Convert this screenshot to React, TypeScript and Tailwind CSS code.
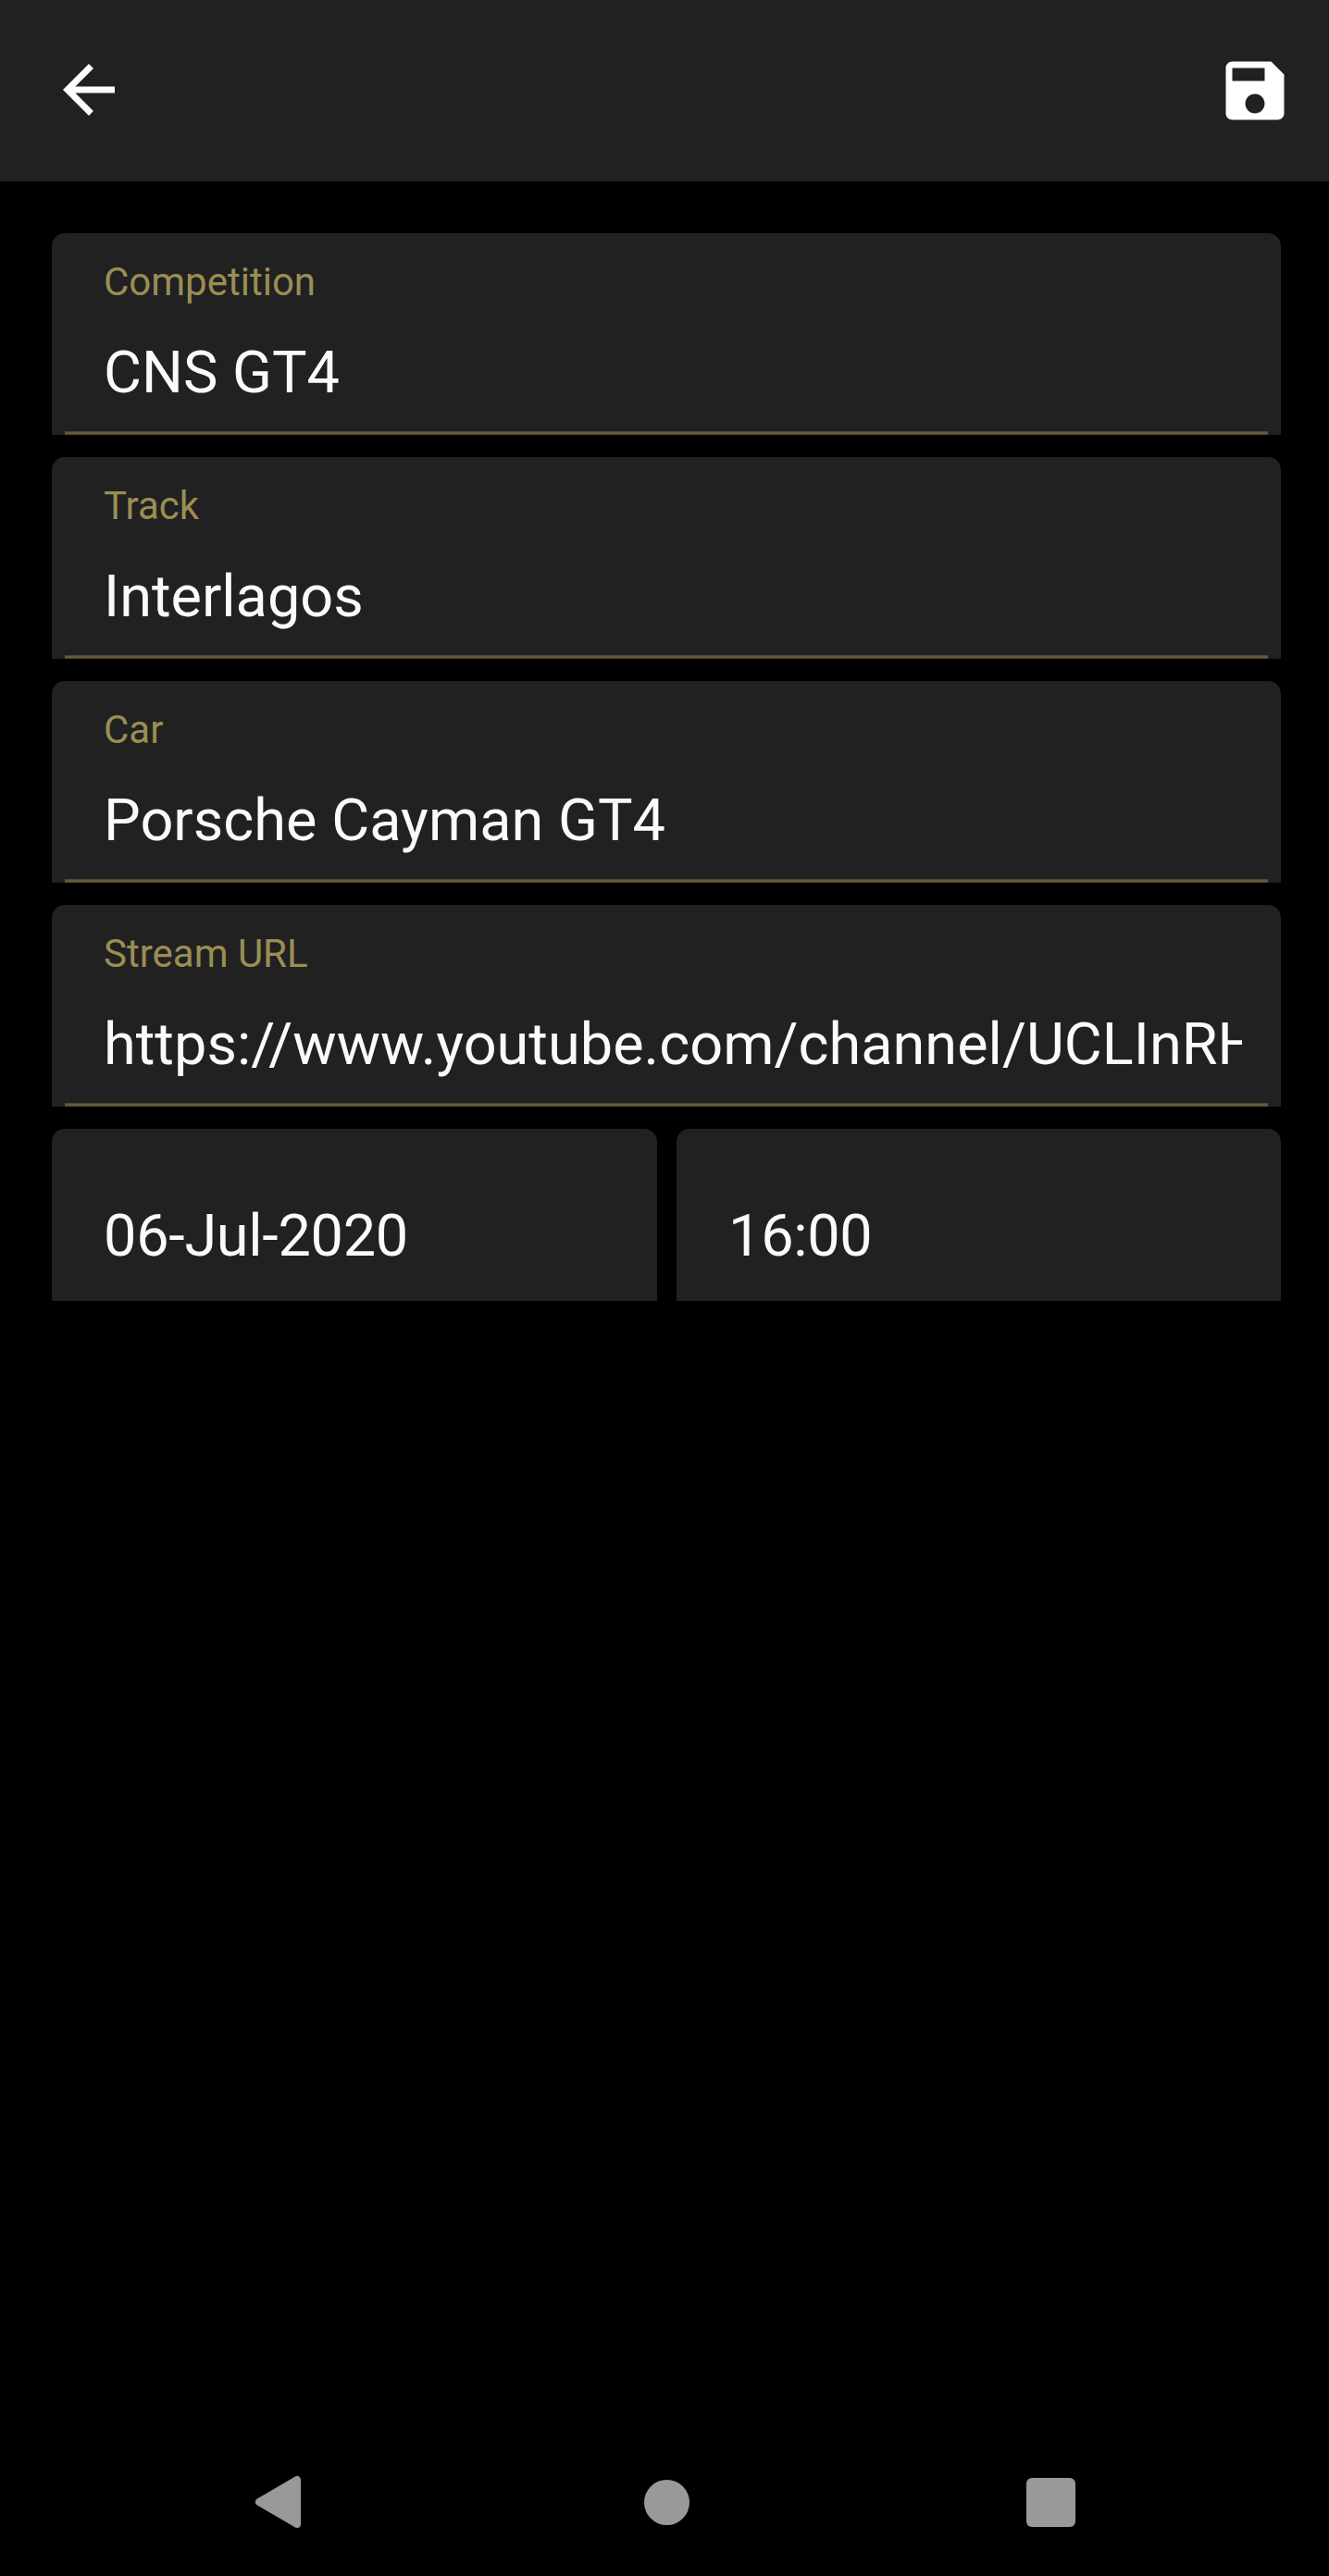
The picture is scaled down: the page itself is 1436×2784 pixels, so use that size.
import React from "react";

const fields = [
  { label: "Competition", value: "CNS GT4", tracking: "tracking-normal" },
  { label: "Track", value: "Interlagos", tracking: "tracking-normal" },
  { label: "Car", value: "Porsche Cayman GT4", tracking: "tracking-[0.04px]" },
  {
    label: "Stream URL",
    value: "https://www.youtube.com/channel/UCLInRH",
    tracking: "tracking-[0.025px]",
  },
];

function Field({ label, value, tracking }: { label: string; value: string; tracking: string }) {
  return (
    <div className="flex h-[218px] flex-col rounded-t-[14px] bg-[#212121] pt-[28px]">
      <div className="ml-14 h-[49px] text-[42px] leading-[49px] text-[#9b8e53]">{label}</div>
      <div
        className={`ml-14 mr-[42px] mt-[37px] h-[74px] overflow-hidden whitespace-nowrap text-[63px] leading-[74px] ${tracking}`}
      >
        {value}
      </div>
      <div className="mx-[14px] mt-[27px] h-1 shrink-0 border-y border-[#51492e] bg-[#645b3b]" />
    </div>
  );
}

function Picker({ value }: { value: string }) {
  return (
    <div className="h-[186px] rounded-t-[14px] bg-[#212121] pl-14 pt-[79px] text-[63px] leading-[74px] tracking-[-0.28px]">
      {value}
    </div>
  );
}

export default function App() {
  return (
    <div className="flex h-[2784px] w-[1436px] flex-col bg-black font-['Roboto',sans-serif] text-[#fafafa]">
      <header className="flex h-[196px] items-start justify-between bg-[#212121] pl-[54px] pr-[38px] pt-[54.5px] text-white">
        <svg viewBox="0 0 24 24" className="size-[84px]" fill="currentColor" aria-label="Back">
          <path d="M20 11H7.83l5.59-5.59L12 4l-8 8 8 8 1.41-1.41L7.83 13H20v-2z" />
        </svg>
        <svg viewBox="0 0 24 24" className="mt-[1.5px] size-[84px]" fill="currentColor" aria-label="Save">
          <path d="M17 3H5c-1.11 0-2 .9-2 2v14c0 1.1.89 2 2 2h14c1.1 0 2-.9 2-2V7l-4-4zm-5 16c-1.66 0-3-1.34-3-3s1.34-3 3-3 3 1.34 3 3-1.34 3-3 3zm3-10H5V5h10v4z" />
        </svg>
      </header>
      <main className="flex flex-1 flex-col gap-6 pl-14 pr-[52px] pt-14">
        {fields.map((f) => (
          <Field key={f.label} {...f} />
        ))}
        <div className="grid grid-cols-[654px_653px] gap-[21px]">
          <Picker value="06-Jul-2020" />
          <Picker value="16:00" />
        </div>
      </main>
      <nav className="flex h-[160px] items-center justify-between pl-[276px] pr-[274.5px] text-[#999999]">
        <svg
          viewBox="0 0 49 56"
          className="h-14 w-[49px]"
          fill="currentColor"
          stroke="currentColor"
          strokeWidth="8"
          strokeLinejoin="round"
        >
          <path d="M4 28 45 4V52Z" />
        </svg>
        <div className="ml-[6.5px] size-[49px] rounded-full bg-current" />
        <div className="size-[53px] rounded-[6px] bg-current" />
      </nav>
    </div>
  );
}
